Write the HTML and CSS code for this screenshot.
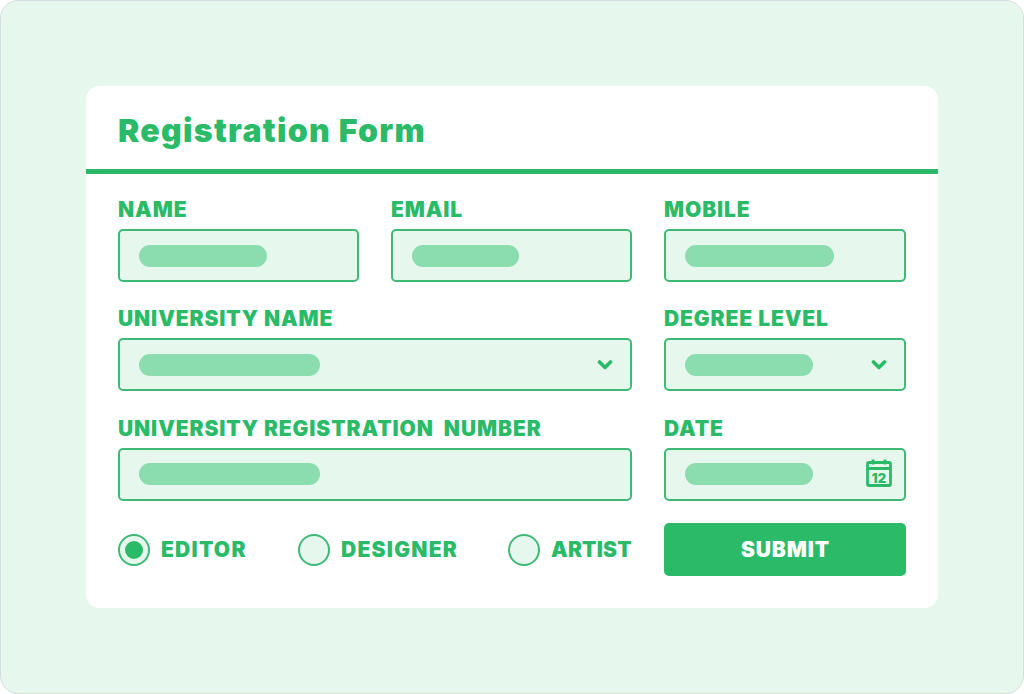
FILE: index.html
```html
<!DOCTYPE html>
<html lang="en">
<head>
<meta charset="utf-8">
<title>Registration Form</title>
<link rel="stylesheet" href="styles.css">
</head>
<body>
<main class="frame">
  <section class="card">
    <h1 class="title">Registration Form</h1>
    <div class="grid">
      <div class="field">
        <div class="label">NAME</div>
        <div class="input"><span class="bar w128"></span></div>
      </div>
      <div class="field">
        <div class="label">EMAIL</div>
        <div class="input"><span class="bar w107"></span></div>
      </div>
      <div class="field">
        <div class="label">MOBILE</div>
        <div class="input"><span class="bar w149"></span></div>
      </div>
      <div class="field span2">
        <div class="label">UNIVERSITY NAME</div>
        <div class="input"><span class="bar w181"></span>
          <svg class="chev" viewBox="0 0 16 12" aria-hidden="true"><path d="M2.5 3 8 8.5 13.5 3"/></svg>
        </div>
      </div>
      <div class="field">
        <div class="label">DEGREE LEVEL</div>
        <div class="input"><span class="bar w128"></span>
          <svg class="chev" viewBox="0 0 16 12" aria-hidden="true"><path d="M2.5 3 8 8.5 13.5 3"/></svg>
        </div>
      </div>
      <div class="field span2">
        <div class="label">UNIVERSITY REGISTRATION  NUMBER</div>
        <div class="input"><span class="bar w181"></span></div>
      </div>
      <div class="field">
        <div class="label">DATE</div>
        <div class="input"><span class="bar w128"></span>
          <svg class="cal" viewBox="0 0 26 28" aria-hidden="true">
            <rect class="cal-frame" x="1.5" y="3.5" width="23" height="23" rx="1.5"/>
            <path class="cal-line" d="M1.5 9.5h23M7 0.5v5M19 0.5v5"/>
            <text class="cal-num" x="13" y="23.6" text-anchor="middle">12</text>
          </svg>
        </div>
      </div>
      <div class="radios span2">
        <div class="radio"><span class="dot on"></span><span class="radio-text">EDITOR</span></div>
        <div class="radio"><span class="dot"></span><span class="radio-text">DESIGNER</span></div>
        <div class="radio"><span class="dot"></span><span class="radio-text tight">ARTIST</span></div>
      </div>
      <button class="submit" type="button">SUBMIT</button>
    </div>
  </section>
</main>
</body>
</html>
```

FILE: styles.css
```css
* { box-sizing: border-box; }
html, body { margin: 0; padding: 0; background: #fff; }
body { font-family: Inter, "Liberation Sans", sans-serif; color: #2bbb68; }
.frame {
  width: 1024px; height: 694px;
  background: #e6f7ee;
  border: 1px solid #d6dde0;
  border-radius: 18px;
  padding: 85px;
}
.card {
  width: 852px; height: 522px;
  background: #fff;
  border-radius: 14px;
  overflow: hidden;
}
.title {
  margin: 0;
  height: 88px;
  padding: 26px 32px 0;
  font-size: 32px;
  line-height: 38px;
  font-weight: 900;
  letter-spacing: 1.3px;
  border-bottom: 5px solid #2bbb68;
}
.grid {
  display: grid;
  grid-template-columns: 241px 241px 242px;
  column-gap: 32px;
  row-gap: 22.4px;
  padding: 21px 32px 0;
}
.span2 { grid-column: span 2; }
.label {
  font-size: 21px;
  line-height: 29px;
  height: 34px;
  font-weight: 900;
  letter-spacing: 0.9px;
  white-space: pre;
}
.input {
  height: 53px;
  display: flex;
  align-items: center;
  justify-content: space-between;
  padding: 0 19px;
  background: #e6f7ee;
  border: 2px solid #3fb976;
  border-radius: 5px;
}
.bar { display: block; height: 22px; border-radius: 11px; background: #8bdcae; }
.w128 { width: 128px; }
.w107 { width: 107px; }
.w149 { width: 149px; }
.w181 { width: 181px; }
.chev { width: 16px; height: 12px; margin-right: -1.5px; }
.chev path { fill: none; stroke: #2bbb68; stroke-width: 3.6; stroke-linecap: round; stroke-linejoin: round; }
.cal { width: 26px; height: 28px; margin: 0 -7px 3px 0; }
.cal-frame { fill: none; stroke: #2bbb68; stroke-width: 2.8; }
.cal-line { fill: none; stroke: #2bbb68; stroke-width: 2.8; }
.cal-num { font-family: Inter, sans-serif; font-size: 13px; font-weight: 900; fill: #2bbb68; }
.radios { display: grid; grid-template-columns: 180px 210px 1fr; align-items: center; height: 53px; }
.radio { display: flex; align-items: center; gap: 11px; }
.dot {
  width: 32px; height: 32px;
  border-radius: 50%;
  background: #e6f7ee;
  border: 2px solid #3fb976;
  display: flex; align-items: center; justify-content: center;
}
.dot.on::after { content: ""; width: 18px; height: 18px; border-radius: 50%; background: #2bbb68; }
.radio-text { font-size: 21px; line-height: 29px; font-weight: 900; letter-spacing: 1.25px; }
.radio-text.tight { letter-spacing: 0.2px; }
.submit {
  height: 53px;
  border: 0;
  border-radius: 5px;
  background: #2bbb68;
  color: #fff;
  font: 900 21px/28px Inter, "Liberation Sans", sans-serif;
  letter-spacing: 0.9px;
  padding: 0 0 0 1px;
}
```
